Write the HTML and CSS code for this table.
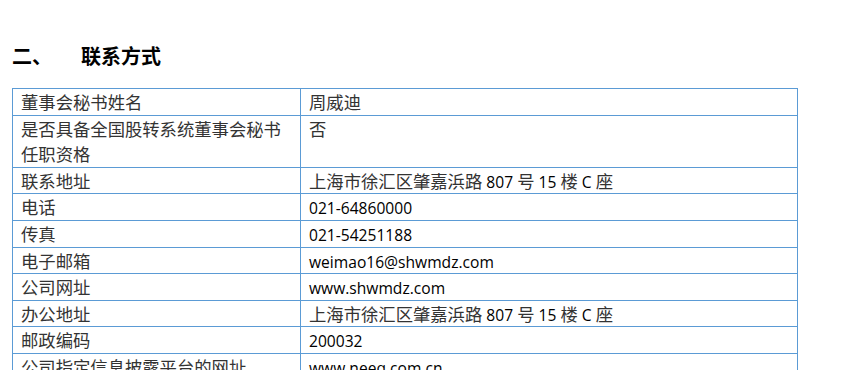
FILE: index.html
```html
<!DOCTYPE html>
<html lang="zh-CN">
<head>
<meta charset="utf-8">
<title>联系方式</title>
<link rel="stylesheet" href="styles.css">
</head>
<body>
<h2 class="section-title"><span class="num">二、</span><span class="title-text">联系方式</span></h2>
<table class="contact">
  <colgroup><col class="c1"><col class="c2"></colgroup>
  <tr><td>董事会秘书姓名</td><td>周威迪</td></tr>
  <tr><td>是否具备全国股转系统董事会秘书任职资格</td><td>否</td></tr>
  <tr><td>联系地址</td><td>上海市徐汇区肇嘉浜路<span class="lat"> 807 </span>号<span class="lat"> 15 </span>楼<span class="lat"> C </span>座</td></tr>
  <tr><td>电话</td><td><span class="lat">021-64860000</span></td></tr>
  <tr><td>传真</td><td><span class="lat">021-54251188</span></td></tr>
  <tr><td>电子邮箱</td><td><span class="lat">weimao16@shwmdz.com</span></td></tr>
  <tr><td>公司网址</td><td><span class="lat">www.shwmdz.com</span></td></tr>
  <tr><td>办公地址</td><td>上海市徐汇区肇嘉浜路<span class="lat"> 807 </span>号<span class="lat"> 15 </span>楼<span class="lat"> C </span>座</td></tr>
  <tr><td>邮政编码</td><td><span class="lat">200032</span></td></tr>
  <tr><td>公司指定信息披露平台的网址</td><td><span class="lat">www.neeq.com.cn</span></td></tr>
</table>
</body>
</html>
```
FILE: styles.css
```css
html, body {
  margin: 0;
  padding: 0;
  background: #ffffff;
}
body {
  font-family: "Noto Sans CJK SC", sans-serif;
  color: #333333;
}
.section-title {
  margin: 46px 0 0 12px;
  font-size: 20px;
  line-height: 20px;
  font-weight: 700;
  color: #000000;
  display: flex;
}
.section-title .num {
  width: 69px;
}
.contact {
  margin: 22px 0 0 12px;
  width: 786px;
  border-collapse: collapse;
  table-layout: fixed;
}
.contact .c1 { width: 288px; }
.contact td {
  border: 1px solid #5b9bd5;
  padding: 0 8px;
  font-size: 17.33px;
  line-height: 25.6px;
  vertical-align: top;
}
.contact .lat {
  font-family: "Open Sans", sans-serif;
  font-size: 15.6px;
  line-height: 14px;
  color: #000000;
}
```
